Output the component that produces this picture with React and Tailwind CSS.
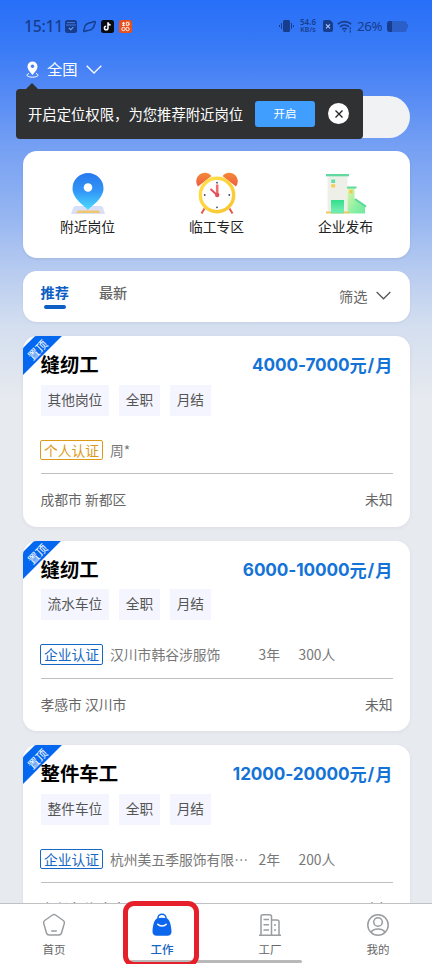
import clsx from 'clsx'

const jobs = [
   {
      id: 1,
      title: '缝纫工',
      salary: '4000-7000',
      tags: ['其他岗位', '全职', '月结'],
      personal: true,
      owner: '周*',
      city: '成都市 新都区',
      distance: '未知',
   },
   {
      id: 2,
      title: '缝纫工',
      salary: '6000-10000',
      tags: ['流水车位', '全职', '月结'],
      owner: '汉川市韩谷涉服饰',
      years: '3年',
      staff: '300人',
      city: '孝感市 汉川市',
      distance: '未知',
   },
   {
      id: 3,
      title: '整件车工',
      salary: '12000-20000',
      tags: ['整件车位', '全职', '月结'],
      owner: '杭州美五季服饰有限⋯',
      years: '2年',
      staff: '200人',
      city: '嘉兴市 海宁市',
      distance: '未知',
   },
]

// 向下箭头
const Chevron = ({ className }) => (
   <svg className={className} viewBox="0 0 16 9" fill="none" stroke="currentColor" strokeWidth="1.3">
      <path d="M.7.8 8 8 15.3.8" />
   </svg>
)

const StatusBar = () => (
   <div className="flex h-[52px] items-center pl-6 pr-6 text-[#173d8c]">
      <span className="w-[35px] whitespace-nowrap font-['Noto_Sans'] text-[15.8px] font-medium leading-5 tracking-[-0.3px]">15:11</span>
      <svg className="ml-[6px] h-[13px] w-[12px]" viewBox="0 0 12 13">
         <rect width="12" height="13" rx="2.5" fill="#173d8c" />
         <path d="M2 2.6h8M1 5h10" stroke="#4a83ea" strokeWidth=".9" />
         <path d="m3.8 7.8 2 1.9 2.6-2.5" fill="none" stroke="#6ca0ff" strokeWidth="1.1" />
      </svg>
      <svg className="ml-[6px] h-[13px] w-[13px]" viewBox="0 0 13 13" fill="none" stroke="#173d8c" strokeWidth="1.5">
         <path d="M1.500 9C.8 5.500 4.500 2.500 9 2.500M4 10.500c4.200.2 7.400-2.700 7.500-6.500" />
         <path d="M9 2.500c1.400-.9 3.200-1.400 3.300-.3.100.6-.3 1.200-.8 1.800M1.500 9c-.7.900-1.100 1.700-.6 2.200.6.600 1.900 0 3.100-.7" />
      </svg>
      <svg className="ml-[5px] h-[13px] w-[13px]" viewBox="0 0 13 13">
         <rect width="13" height="13" rx="2.5" fill="#080a14" />
         <path d="M7 2.300v5.700a1.800 1.800 0 1 1-1.800-1.800M7 2.600c.3 1.500 1.200 2.200 2.700 2.300" fill="none" stroke="#fff" strokeWidth="1.500" />
      </svg>
      <svg className="ml-[5px] h-[13px] w-[13px]" viewBox="0 0 13 13">
         <rect width="13" height="13" rx="2.500" fill="#e8501c" />
         <g fill="none" stroke="#fff" strokeWidth=".9">
            <path d="M3 3.300h3M3 5.300h3M4.500 2v4M7.300 2.300h2.500v3H7.300zM9.800 4h1.200" />
            <circle cx="4.500" cy="9" r="1.700" />
            <circle cx="8.500" cy="9" r="1.700" />
         </g>
      </svg>

      <svg className="ml-auto h-[14px] w-[15px]" viewBox="0 0 15 14" fill="#173d8c">
         <rect x="4" y="1" width="7" height="12" rx="1.500" />
         <path d="M2 4h1v6H2zM0 6h1v2H0zM12 4h1v6h-1zM14 6h1v2h-1z" />
      </svg>
      <div className="ml-[4px] flex w-[20px] flex-col items-center font-['Noto_Sans'] font-semibold">
         <span className="text-[8px] leading-[8px]">54.6</span>
         <span className="text-[7px] leading-[8px]">KB/s</span>
      </div>
      <svg className="ml-[5px] h-[12px] w-[10px]" viewBox="0 0 10 12">
         <path d="M2 0h5l3 3v7a2 2 0 0 1-2 2H2a2 2 0 0 1-2-2V2a2 2 0 0 1 2-2z" fill="#173d8c" />
         <path d="m3 4.300 4 4M7 4.300l-4 4" stroke="#a6c4ff" strokeWidth="1.200" />
      </svg>
      <svg className="ml-[4px] h-[13px] w-[16px]" viewBox="0 0 16 13" fill="none" stroke="#173d8c" strokeWidth="1.600">
         <path d="M.8 4.200a10 10 0 0 1 13.400 0M3 6.800a7 7 0 0 1 9 0M5.200 9.200a3.800 3.800 0 0 1 4.600 0" />
         <path d="m6 10.500 1.500 1.700L9 10.500z" fill="#173d8c" stroke="none" />
         <path d="M13.300 7.500v2M13.300 10.500v2" strokeWidth="1.300" />
      </svg>
      <span className="ml-[4px] w-[27px] whitespace-nowrap font-['Noto_Sans'] text-[13.3px] leading-5 tracking-[-0.4px]">26%</span>
      <div className="ml-[3px] flex h-[11px] w-[20px] overflow-hidden rounded-[3px] bg-[#2a5fc9]">
         <div className="w-[5px] bg-[#173d8c]" />
      </div>
      <div className="h-1 w-px bg-[#2a5fc9]" />
   </div>
)

const LocationTip = () => (
   <div className="absolute left-4 top-[89px] z-10 flex h-[50px] w-[347px] items-center rounded-[4px] bg-[#303133] pl-3 text-white">
      <div className="absolute left-[10px] top-[-6px] h-0 w-0 border-x-[6.5px] border-b-[6px] border-x-transparent border-b-[#303133]" />
      <span className="whitespace-nowrap text-[14.35px] leading-5">开启定位权限，为您推荐附近岗位</span>
      <button className="absolute left-[239px] top-3 h-[26px] w-[60px] rounded-[3px] bg-[#409eff] text-[11.5px] leading-[24px]">
         <span className="relative -top-px">开启</span>
      </button>
      <button className="absolute left-[312px] top-[14px] flex h-[21px] w-[21px] items-center justify-center rounded-full bg-white">
         <svg className="h-[8px] w-[8px]" viewBox="0 0 8 8" stroke="#222" strokeWidth="1.300">
            <path d="m.5.500 7 7M7.500.500l-7 7" />
         </svg>
      </button>
   </div>
)

const PinArt = () => (
   <svg className="h-[42px] w-[42px]" viewBox="0 0 42 42">
      <defs>
         <linearGradient id="pin" x1="0" y1="0" x2="0" y2="1">
            <stop stopColor="#2878ed" />
            <stop offset=".5" stopColor="#3297f7" />
            <stop offset="1" stopColor="#4cdcfd" />
         </linearGradient>
      </defs>
      <path d="M8 34h26a2 2 0 0 1 2 1.500l2 6.500H4l2.300-6.500A2 2 0 0 1 8 34z" fill="#d9dff6" />
      <path d="M11 38.500h21l1 2.500H9z" fill="#f2c66d" />
      <path d="M21 38c-2.500-3.500-15.500-11-15.500-21.500a15.500 15.500 0 0 1 31 0C36.500 27 23.500 34.500 21 38z" fill="url(#pin)" />
      <circle cx="21" cy="15.500" r="4.300" fill="#fff" />
   </svg>
)

const ClockArt = () => (
   <svg className="h-[42px] w-[42px]" viewBox="0 0 42 42">
      <defs>
         <linearGradient id="bell" x1="0" y1="0" x2="0" y2="1">
            <stop stopColor="#f58a35" />
            <stop offset="1" stopColor="#ee5b45" />
         </linearGradient>
         <linearGradient id="ring" x1="0" y1="0" x2="1" y2="1">
            <stop stopColor="#ffe14d" />
            <stop offset="1" stopColor="#f8c52f" />
         </linearGradient>
      </defs>
      <path d="m8.500 36.500-3 5M33.500 36.500l3 5" stroke="#e8584c" strokeWidth="2" />
      <path d="M2 14.500A7.800 7.800 0 0 1 15.500 4zM40 14.500A7.800 7.800 0 0 0 26.500 4z" fill="url(#bell)" />
      <circle cx="21" cy="23" r="16.700" fill="#fff" stroke="url(#ring)" strokeWidth="3.400" />
      <circle cx="21" cy="10.700" r=".9" fill="#3c4668" />
      <circle cx="21" cy="35.300" r=".9" fill="#3c4668" />
      <circle cx="8.700" cy="23" r=".9" fill="#3c4668" />
      <circle cx="33.300" cy="23" r=".9" fill="#3c4668" />
      <path d="m14.500 17 6.500 6" stroke="#e1505a" strokeWidth="1.900" />
      <path d="M21.200 12.500V23" stroke="#ef6e6e" strokeWidth="2.600" />
      <circle cx="21.200" cy="23" r="2.200" fill="#e1505a" />
   </svg>
)

const BuildingArt = () => (
   <svg className="h-[42px] w-[42px]" viewBox="0 0 42 42">
      <defs>
         <linearGradient id="door" x1="0" y1="0" x2="0" y2="1">
            <stop stopColor="#2fe08b" />
            <stop offset="1" stopColor="#7bedb5" />
         </linearGradient>
         <linearGradient id="annex" x1="0" y1="0" x2="1" y2="1">
            <stop stopColor="#e5f3a4" />
            <stop offset=".6" stopColor="#8cf0a4" />
            <stop offset="1" stopColor="#6fe9a0" />
         </linearGradient>
      </defs>
      <path d="M2.500 3h20v38h-20z" fill="#eeefe9" />
      <path d="M1 2h23v2.300H1z" fill="#63d9a1" />
      <path d="M6.300 7.500h3.800V11H6.300z" fill="#62dfa7" />
      <path d="M6.300 12.200h3.800v3.300H6.300z" fill="#f5cf52" />
      <path d="M22.500 15h7v12L40 34.500v7H22.500z" fill="url(#annex)" />
      <path d="M22 14.500h9.500v2H22z" fill="#5edb9d" />
      <path d="M24.500 18h3v3.300h-3z" fill="#f5c84c" />
      <path d="m30 27 11 7.600" stroke="#5bd79a" strokeWidth="2" />
      <path d="M6 28h13v12H6z" fill="url(#door)" />
      <path d="M1 39.500h23v2H1z" fill="#f3c75e" />
      <path d="M6 38h13v3.500H6z" fill="#6debae" />
   </svg>
)

const shortcuts = [
   { label: '附近岗位', Art: PinArt },
   { label: '临工专区', Art: ClockArt },
   { label: '企业发布', Art: BuildingArt },
]

const JobCard = ({ job }) => (
   <article className="relative h-[190.5px] shrink-0 overflow-hidden rounded-[14px] bg-white px-[17.5px] pt-[13px] shadow-[0_1px_4px_rgba(0,0,0,0.06)]">
      {/* 置顶角标 */}
      <div className="absolute left-[-32.5px] top-[2.5px] flex h-[19px] w-[90px] origin-center -rotate-45 items-center justify-center bg-[#0467f0] text-[11.2px] leading-none text-white">
         <span className="relative top-px leading-[12px]">置顶</span>
      </div>
      <div className="relative flex h-[29px] items-center justify-between">
         <h2 className="text-[19.4px] font-bold leading-[29px] text-black">{job.title}</h2>
         <div className="relative top-px flex items-center whitespace-nowrap text-[17.2px] font-bold leading-[29px] text-[#1473d6]">
            <span className="font-[Inter] tracking-[-0.12px]">{job.salary}</span>
            <span>元</span>
            <span className="px-px font-[Inter]">/</span>
            <span>月</span>
         </div>
      </div>
      <div className="mt-[6.5px] flex gap-[9.5px]">
         {job.tags.map((tag) => (
            <span key={tag} className="h-[31px] bg-[#f4f5fe] px-[7px] text-[13.7px] leading-[28.5px] text-[#555]">
               {tag}
            </span>
         ))}
      </div>
      <div className="mt-6 flex h-[20.5px] items-center whitespace-nowrap text-[13.8px] leading-5 text-[#777]">
         <span className={clsx('-ml-[0.5px] flex h-[20.5px] w-[63px] items-center justify-center rounded-[2px] border', job.personal ? 'border-[#dc9a1a] text-[#dc9a1a]' : 'border-[#1668c4] text-[#1668c4]')}>{job.personal ? '个人认证' : '企业认证'}</span>
         <span className="ml-[7px] w-[148.5px]">{job.owner}</span>
         <span className="w-10">{job.years}</span>
         <span>{job.staff}</span>
      </div>
      <div className="mt-[13px] h-px bg-[#bdbfc2]" />
      <div className="mt-[15px] flex justify-between text-[13.8px] leading-5 text-[#666]">
         <span>{job.city}</span>
         <span>{job.distance}</span>
      </div>
   </article>
)

const HomeIcon = () => (
   <svg className="h-6 w-6" viewBox="0 0 24 24" fill="none" stroke="currentColor" strokeWidth="1.500" strokeLinecap="round" strokeLinejoin="round">
      <path d="M10.500 2a2.600 2.600 0 0 1 3 0l7.800 5.500a2.600 2.600 0 0 1 1 2.900L19.500 20a2.800 2.800 0 0 1-2.700 2H7.200a2.800 2.800 0 0 1-2.700-2L1.700 10.400a2.600 2.600 0 0 1 1-2.900z" />
      <path d="M9.700 18h4.600" />
   </svg>
)

const BagIcon = () => (
   <svg className="h-6 w-6" viewBox="0 0 24 24">
      <path d="M8 7V5a4 3.800 0 0 1 8 0v2" fill="none" stroke="#0c67ee" strokeWidth="1.500" />
      <path d="M7.500 5.300c3-.7 6-.7 9 0 3 .7 4.800 7 5 13 .1 3-1.300 4.400-4.300 4.400H6.800c-3 0-4.400-1.400-4.300-4.400.2-6 2-12.300 5-13z" fill="#0c67ee" />
      <path d="M7.700 11.300c2 2.300 6.600 2.300 8.600 0" fill="none" stroke="#fff" strokeWidth="1.500" strokeLinecap="round" />
   </svg>
)

const FactoryIcon = () => (
   <svg className="h-6 w-6" viewBox="0 0 24 24" fill="none" stroke="currentColor" strokeWidth="1.500">
      <path d="M1 22.300h22M3 22V3.500A1.800 1.800 0 0 1 4.800 1.700h6.900a1.800 1.800 0 0 1 1.800 1.800V22M13.500 7h5.700A1.800 1.800 0 0 1 21 8.800V22M5.500 6.500h5.500M5.500 11.700H11M5.500 17H11M16 12h2M16 17h2" />
   </svg>
)

const UserIcon = () => (
   <svg className="h-6 w-6" viewBox="0 0 24 24" fill="none" stroke="currentColor" strokeWidth="1.500">
      <circle cx="12" cy="12" r="10.200" />
      <circle cx="12" cy="9" r="4.300" />
      <path d="M5 19.300c1.500-2.700 3.500-3.300 7-3.300s5.500.6 7 3.300" />
   </svg>
)

const navs = [
   { label: '首页', Icon: HomeIcon },
   { label: '工作', Icon: BagIcon, active: true },
   { label: '工厂', Icon: FactoryIcon },
   { label: '我的', Icon: UserIcon },
]

const App = () => {
   return (
      <div className="relative flex h-[964px] w-[432px] flex-col overflow-hidden bg-[#e7eaef] bg-[linear-gradient(180deg,#276ff8_0px,#3a7bf6_50px,#5389f5_90px,#749ff3_145px,#98b7f1_220px,#b7cbf0_270px,#d3deef_325px,#e7eaef_400px)] font-['Noto_Sans_CJK_SC',sans-serif]">
         <StatusBar />

         <header className="flex h-[34px] items-center pl-[26px] text-white">
            <svg className="h-[17px] w-[13px]" viewBox="0 0 13 17">
               <path d="M6.500 14C5 12 1.500 9 1.500 5.500a5 5 0 0 1 10 0C11.500 9 8 12 6.500 14z" fill="#fff" />
               <circle cx="6.500" cy="5.200" r="1.700" fill="#477ff3" />
               <path d="M3 12.500c-5 2 0 3.700 3.500 3.700s8.500-1.700 3.500-3.700" fill="none" stroke="#fff" />
            </svg>
            <span className="relative -top-px ml-2 text-[15.3px] leading-5">全国</span>
            <Chevron className="ml-[8.5px] h-[9px] w-4" />
         </header>
         <LocationTip />
         <div className="ml-[23px] mr-[22px] mt-[10px] h-[42px] shrink-0 rounded-full bg-[#f1f2f3]" />

         <main className="ml-[23px] mr-[22px] mt-[13px] flex flex-col">
            <section className="grid h-[107px] shrink-0 grid-cols-3 rounded-[14px] bg-white pt-[21px] shadow-[0_1px_3px_rgba(0,0,0,0.08)]">
               {shortcuts.map(({ label, Art }) => (
                  <div key={label} className="flex flex-col items-center text-[13.8px] leading-5 text-[#222]">
                     <Art />
                     <span className="mt-[2px]">{label}</span>
                  </div>
               ))}
            </section>

            <section className="mt-[13px] flex h-[51px] shrink-0 items-start rounded-[14px] bg-white px-[17.5px] pt-[11px] text-[14.2px] leading-5 text-[#666] shadow-[0_1px_3px_rgba(0,0,0,0.06)]">
               <div className="flex flex-col items-center font-bold text-[#0d5fc4]">
                  推荐
                  <span className="mt-[3px] h-1 w-[22px] rounded-full bg-[#0d5fc4]" />
               </div>
               <span className="ml-[30px] font-medium">最新</span>
               <div className="ml-auto mt-[3.5px] flex items-center">
                  筛选
                  <Chevron className="ml-2 mr-[2px] h-[9px] w-[15px] text-[#555]" />
               </div>
            </section>

            <div className="mt-[14px] flex flex-col gap-[14px]">
               {jobs.map((job) => (
                  <JobCard key={job.id} job={job} />
               ))}
            </div>
         </main>

         <nav className="absolute inset-x-0 bottom-0 grid h-[61px] grid-cols-4 border-t border-[#bfc1c4] bg-white pt-[9px]">
            {navs.map(({ label, Icon, active }) => (
               <div key={label} className={clsx('flex flex-col items-center text-[11.5px] leading-4', active ? 'text-[#1563c2]' : 'text-[#999ca0]')}>
                  <Icon />
                  <span className={clsx('mt-1', active ? 'font-medium' : 'text-[#666]')}>{label}</span>
               </div>
            ))}
            <div className="absolute bottom-[1px] left-[130px] h-[3px] w-[172px] rounded-full bg-[#b9b9b9]" />
         </nav>
         <div className="absolute left-[123px] top-[901px] h-[66px] w-[76px] rounded-[11px] border-[5px] border-[#e5202b]" />
      </div>
   )
}

export default App
